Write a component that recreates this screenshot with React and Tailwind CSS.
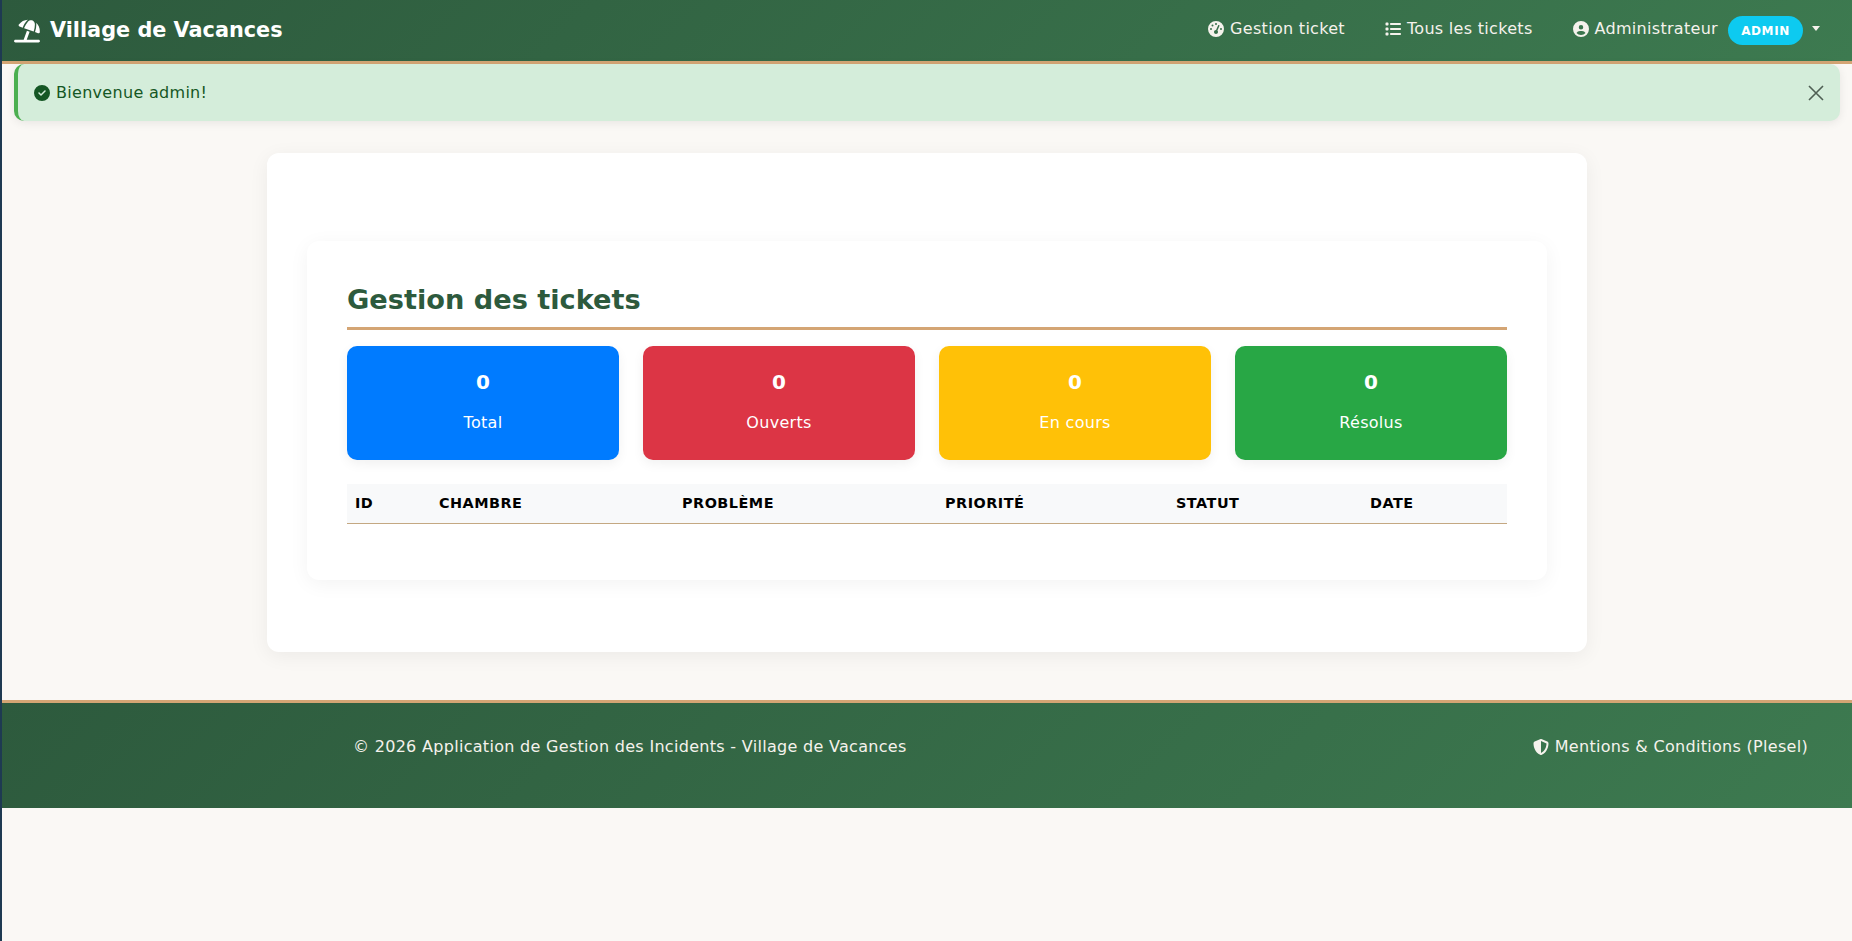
import React from "react";
import {
  FaUmbrellaBeach,
  FaGaugeHigh,
  FaList,
  FaCircleUser,
  FaCircleCheck,
  FaShieldHalved,
} from "react-icons/fa6";

const stats = [
  { label: "Total", bg: "bg-[#007bff]" },
  { label: "Ouverts", bg: "bg-[#dc3545]" },
  { label: "En cours", bg: "bg-[#ffc107]" },
  { label: "Résolus", bg: "bg-[#28a745]" },
];

const columns = ["ID", "Chambre", "Problème", "Priorité", "Statut", "Date"];

function NavLink({ icon, children }) {
  return (
    <a className="flex items-center gap-[6px] px-2 pb-[4px] text-[#f5f2ec] text-base tracking-[0.3px]">
      {icon}
      <span>{children}</span>
    </a>
  );
}

export default function App() {
  return (
    <div className="min-h-[941px] bg-[#faf8f5] border-l-2 border-[#1e3a52] font-['DejaVu_Sans',sans-serif]">
      {/* Navbar */}
      <nav className="h-[64px] border-b-[3px] border-[#d4a574] bg-[linear-gradient(135deg,#2d5a3d,#3d7a50)] flex items-center justify-between pl-3 pr-[32px]">
        <a className="flex items-center gap-[10px] text-white text-[20.8px] font-bold">
          <FaUmbrellaBeach className="text-[26px]" />
          Village de Vacances
        </a>
        <div className="flex items-center">
          <NavLink icon={<FaGaugeHigh className="text-base" />}>Gestion ticket</NavLink>
          <div className="w-[24px]" />
          <NavLink icon={<FaList className="text-base" />}>Tous les tickets</NavLink>
          <div className="w-[24px]" />
          <NavLink icon={<FaCircleUser className="text-base" />}>Administrateur</NavLink>
          <span className="ml-[2px] h-[29px] w-[75px] flex items-center justify-center rounded-full bg-[#0dcaf0] text-white text-xs font-bold tracking-[0.6px]">
            ADMIN
          </span>
          <span className="ml-[9px] mb-[4px] w-0 h-0 border-x-[4px] border-x-transparent border-t-[5px] border-t-[#f5f2ec]" />
        </div>
      </nav>

      {/* Alert */}
      <div className="mx-3 h-[57px] flex items-center justify-between bg-[#d4edda] border-l-4 border-[#4caf50] rounded-[10px] pl-[16px] pr-[16px] text-[#155724] text-base tracking-[0.3px] shadow-[0_2px_10px_rgba(0,0,0,0.08)]">
        <div className="flex items-center gap-[6px]">
          <FaCircleCheck className="text-base" />
          <span>Bienvenue admin!</span>
        </div>
        <svg width="16" height="16" viewBox="0 0 16 16" stroke="#4f5f54" strokeWidth="1.6" fill="none">
          <path d="M1 1 15 15M15 1 1 15" />
        </svg>
      </div>

      {/* Main */}
      <main className="w-[1320px] mx-auto mt-[32px] bg-white rounded-[12px] shadow-[0_4px_20px_rgba(0,0,0,0.06)] pt-[88px] pb-[72px] px-[40px]">
        <div className="bg-white rounded-[12px] shadow-[0_4px_20px_rgba(0,0,0,0.05)] p-[40px] h-[339px]">
          <h2 className="text-[27.2px] font-bold text-[#2d5a3d] pb-[8px] border-b-[3px] border-[#d4a574] leading-[38px]">
            Gestion des tickets
          </h2>
          <div className="grid grid-cols-4 gap-6 mt-[16px]">
            {stats.map((s) => (
              <div
                key={s.label}
                className={`${s.bg} h-[114px] rounded-[10px] shadow-[0_4px_12px_rgba(0,0,0,0.06)] text-white text-center flex flex-col items-center pt-[21px]`}
              >
                <div className="text-xl font-bold leading-[30px]">0</div>
                <div className="mt-[14px] text-base tracking-[0.3px]">{s.label}</div>
              </div>
            ))}
          </div>
          <div className="mt-[24px] h-[40px] grid grid-cols-[84px_243px_263px_231px_194px_145px] items-center bg-[#f8f9fa] border-b border-[#c4a882]">
            {columns.map((c) => (
              <div key={c} className="px-2 text-[14.4px] font-bold uppercase text-black tracking-[0.5px]">
                {c}
              </div>
            ))}
          </div>
        </div>
      </main>

      {/* Footer */}
      <footer className="mt-[48px] h-[108px] border-t-[3px] border-[#d4a574] bg-[linear-gradient(135deg,#2d5a3d,#3d7a50)] flex justify-between pl-[351px] pr-[44px] pt-[32px] text-[#f5f2ec] text-base tracking-[0.3px]">
        <span>© 2026 Application de Gestion des Incidents - Village de Vacances</span>
        <span className="flex items-center gap-[6px] self-start">
          <FaShieldHalved className="text-base" />
          Mentions &amp; Conditions (Plesel)
        </span>
      </footer>
    </div>
  );
}
